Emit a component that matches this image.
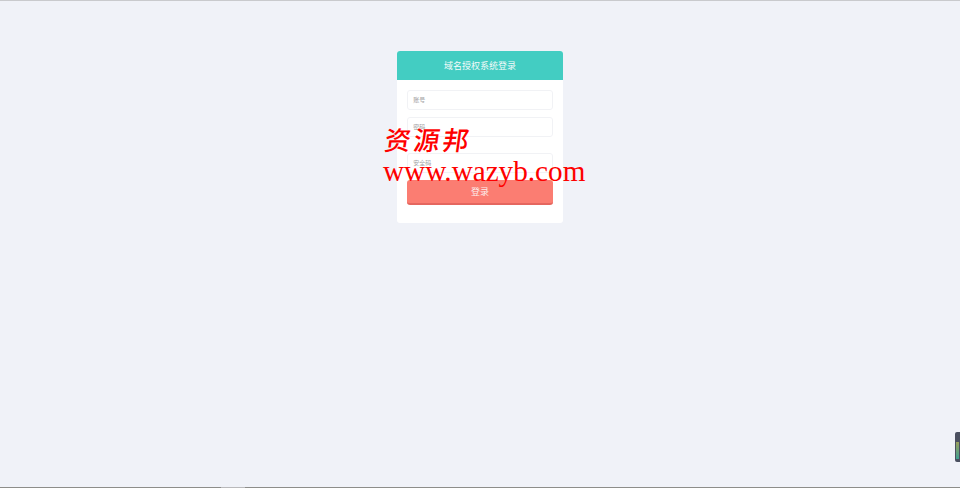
<script>
  const fields = ['账号', '密码', '安全码'];
</script>

<div class="page">
  <div class="topline"></div>
  <main class="card">
    <header class="head">域名授权系统登录</header>
    <form class="body">
      <div class="field one"><input placeholder={fields[0]} /></div>
      <div class="field two"><input placeholder={fields[1]} /></div>
      <div class="field three"><input placeholder={fields[2]} /></div>
      <button type="button" class="submit">登录</button>
    </form>
  </main>
  <div class="mark">
    <div class="cn"><span>资</span><span>源</span><span>邦</span></div>
    <div class="url">www.wazyb.com</div>
  </div>
  <div class="widget"><i></i></div>
  <div class="bottomline"><b></b></div>
</div>

<style>
  :global(body) { margin: 0; background: #f0f2f8; }
  .page {
    position: relative;
    height: 488px;
    overflow: hidden;
    display: flex;
    flex-direction: column;
    align-items: center;
    font-family: "Noto Sans CJK SC", "Liberation Sans", sans-serif;
  }
  .topline { align-self: stretch; height: 1px; background: #c9cacd; }
  .card {
    margin-top: 49.5px;
    width: 165.5px;
    height: 172.5px;
    background: #fff;
    border-radius: 3px;
    overflow: hidden;
  }
  .head {
    height: 29.5px;
    line-height: 29.5px;
    text-align: center;
    background: #43cdc2;
    color: #f4fbfa;
    font-size: 9px;
  }
  .body { display: flex; flex-direction: column; padding: 0 10px; }
  .field { height: 19.5px; }
  .one { margin-top: 10px; }
  .two { margin-top: 7.5px; }
  .three { margin-top: 16.5px; }
  input {
    box-sizing: border-box;
    display: block;
    width: 100%;
    height: 100%;
    border: 1px solid #f1f2f5;
    border-radius: 3px;
    background: #fff;
    padding: 0 5px;
    font-family: inherit;
    font-size: 6px;
    outline: none;
  }
  input::placeholder { color: #a2a2a2; opacity: 1; }
  .submit {
    margin-top: 7.5px;
    width: 100%;
    height: 25px;
    border: 0;
    border-bottom: 2px solid #e5675f;
    border-radius: 3px;
    background: #fb7d72;
    color: #fbeeec;
    font-family: inherit;
    font-size: 9px;
    padding: 0;
  }
  .mark {
    position: absolute;
    left: 383px;
    top: 125px;
    color: #fe0000;
    pointer-events: none;
  }
  .cn {
    display: flex;
    gap: 3px;
    font-size: 26px;
    line-height: 28px;
    font-weight: 500;
    font-family: "Noto Sans CJK SC", sans-serif;
    transform: skewX(-8deg);
    transform-origin: left bottom;
  }
  .url {
    margin-top: 4px;
    font-family: "Liberation Serif", serif;
    font-size: 29.2px;
    line-height: 28px;
    white-space: nowrap;
  }
  .widget {
    position: absolute;
    right: 0;
    top: 432px;
    width: 5px;
    height: 30px;
    background: #4b5060;
    border-radius: 2px 0 0 2px;
  }
  .widget i {
    position: absolute;
    left: 1px;
    bottom: 3px;
    width: 3px;
    height: 17px;
    background: linear-gradient(#9aa05c, #3f9f90);
  }
  .bottomline {
    position: absolute;
    left: 0;
    right: 0;
    bottom: 0;
    height: 1px;
    background: #8d8d8a;
  }
  .bottomline b {
    position: absolute;
    left: 221px;
    width: 24px;
    height: 1px;
    background: #b9b9bb;
  }
</style>
